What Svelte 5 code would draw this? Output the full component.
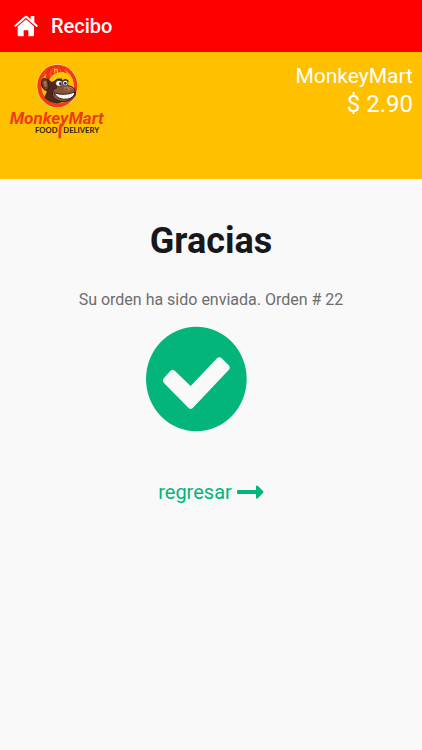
<script>
  const store = 'MonkeyMart';
  const total = '$ 2.90';
  const order = 22;
</script>

<div class="page">
  <header class="bar">
    <a class="home" href="#home" aria-label="Inicio">
      <svg width="24" height="22" viewBox="0 0 72 66" aria-hidden="true">
        <path fill="#fff" d="M36 13 60 34V60Q60 64 56 64H43V46H29V64H15Q11 64 11 60V34Z" />
        <path fill="#fff" d="M0 32 33 3Q36 1 39 3L50 13V3H61V22L72 32 68 37 36 9 4 37Z" />
        <path fill="none" stroke="#f00" stroke-width="2" d="M5 38 36 11 67 38" />
      </svg>
    </a>
    <h1>Recibo</h1>
  </header>

  <section class="summary">
    <svg class="logo" width="100" height="84" viewBox="0 0 300 252" role="img" aria-label="MonkeyMart Food Delivery">
      <g transform="translate(69 0)">
        <ellipse cx="82" cy="78" rx="62" ry="66" fill="#ffd49a" />
        <ellipse cx="82" cy="78" rx="60" ry="64" fill="#f33b18" />
        <ellipse cx="83" cy="78" rx="49" ry="53" fill="#fdb90b" />
        <path fill="#51271b" d="M51 52Q42 73 50 96L43 112Q57 130 83 131L118 119Q96 113 91 90L98 45Z" />
        <path fill="#693a28" stroke="#3d1c17" stroke-width="3" d="M53 60Q38 49 35 65 32 81 43 89 53 96 57 81Z" />
        <path fill="#a66d50" d="M50 65Q40 58 40 70 42 81 50 82Z" />
        <path fill="#ef3416" stroke="#d9250d" stroke-width="2" d="M48 53Q47 24 75 21 105 20 111 47L111 53Q93 39 75 47L58 57Z" />
        <path fill="#ffc40a" d="M57 59Q70 34 100 36 120 42 124 66 102 51 84 57L65 66Z" />
        <path fill="none" stroke="#ff714e" stroke-width="2" d="M61 49Q60 31 75 22M94 38Q92 27 83 22" />
        <path fill="none" stroke="#ffc40a" stroke-width="4" d="M74 38V28H81L83 38" />
        <path fill="#85533b" stroke="#3d1c17" stroke-width="3" d="M76 70Q91 56 109 65L114 77Q136 80 137 99 138 111 124 117 103 130 83 121 66 114 67 99 68 86 80 84Z" />
        <ellipse cx="87" cy="70" rx="10" ry="9" fill="#fff" stroke="#32201b" stroke-width="2" />
        <ellipse cx="106" cy="69" rx="8" ry="8" fill="#fff" stroke="#32201b" stroke-width="2" />
        <circle cx="91" cy="71" r="4" fill="#17293c" />
        <circle cx="106" cy="70" r="4" fill="#17293c" />
        <path fill="none" stroke="#32201b" stroke-width="4" d="M76 63Q84 54 94 61M101 60Q109 56 115 65" />
        <path fill="#a4735a" d="M101 82Q119 75 131 86 122 93 106 92Z" />
        <path fill="none" stroke="#42221b" stroke-width="3" d="M107 87 111 89M121 86 124 88" />
        <path fill="#fff" stroke="#391d1a" stroke-width="3" d="M72 98Q88 104 104 103 121 102 134 96 134 112 114 117 84 122 72 98Z" />
        <path fill="none" stroke="#b8a59d" stroke-width="1" d="M84 102 88 110M94 103 97 114M105 103V115M116 102V114M125 99 124 109" />
      </g>
      <path d="M162 194Q158 208 158 232" fill="none" stroke="#ee3d16" stroke-width="8" stroke-linecap="round" />
      <text class="brand" x="8" y="192">MonkeyMart</text>
      <text class="tag" x="84" y="219">FOOD</text>
      <text class="tag" x="169" y="219">DELIVERY</text>
    </svg>
    <div class="amount">
      <div class="store">{store}</div>
      <div class="total">{total}</div>
    </div>
  </section>

  <main>
    <h2>Gracias</h2>
    <p>Su orden ha sido enviada. Orden # {order}</p>
    <svg class="check" width="130" height="106" viewBox="0 0 390 318" aria-hidden="true">
      <ellipse cx="151" cy="159" rx="151" ry="157" fill="#03b57a" />
      <path fill="#f9f9f9" d="M54 156 73 135Q80 128 87 135L134 180 213 97Q220 90 227 97L248 118Q255 125 248 132L141 245Q134 252 127 245L54 171Q47 163 54 156Z" />
    </svg>
    <a class="back" href="#regresar">
      <span>regresar</span>
      <svg width="27" height="14" viewBox="0 0 27 14" aria-hidden="true">
        <path fill="#03b57a" d="M1 5H19V1Q20 0 21 1L26 6Q27 7 26 8L21 13Q20 14 19 13V9H1Q0 9 0 8V6Q0 5 1 5Z" />
      </svg>
    </a>
  </main>
</div>

<style>
  :global(body) {
    margin: 0;
    background: #f9f9f9;
  }
  .page {
    min-height: 100vh;
    font-family: Roboto, "Liberation Sans", sans-serif;
    background: #f9f9f9;
  }
  .bar {
    display: flex;
    align-items: center;
    gap: 13px;
    height: 52px;
    padding: 0 14px;
    background: #f00;
    color: #fff;
  }
  .home {
    display: flex;
  }
  h1 {
    margin: 0;
    font-size: 20px;
    line-height: 24px;
    font-weight: 500;
  }
  .summary {
    display: flex;
    justify-content: space-between;
    align-items: flex-start;
    box-sizing: border-box;
    height: 127px;
    padding: 8px 9px 0 7px;
    background: #ffc000;
    color: #fff;
  }
  .logo {
    display: block;
    overflow: visible;
  }
  .brand {
    font: italic 700 51px Roboto, sans-serif;
    fill: #ee3d16;
  }
  .tag {
    font: 700 23px Lato, sans-serif;
    fill: #33210a;
  }
  .amount {
    padding-top: 2px;
    text-align: right;
    line-height: 28px;
  }
  .store {
    font-size: 21px;
  }
  .total {
    font-size: 24px;
  }
  main {
    display: flex;
    flex-direction: column;
    align-items: center;
    padding: 40px 16px;
  }
  h2 {
    margin: 0;
    font-size: 36px;
    line-height: 44px;
    font-weight: 700;
    color: #17181b;
  }
  p {
    margin: 25px 0 14px;
    font-size: 16px;
    line-height: 24px;
    color: #6d6d6d;
    text-align: center;
  }
  .check {
    display: block;
  }
  .back {
    display: flex;
    align-items: center;
    gap: 5px;
    margin-top: 48px;
    font-size: 20px;
    line-height: 24px;
    color: #03b57a;
    text-decoration: none;
  }
</style>
